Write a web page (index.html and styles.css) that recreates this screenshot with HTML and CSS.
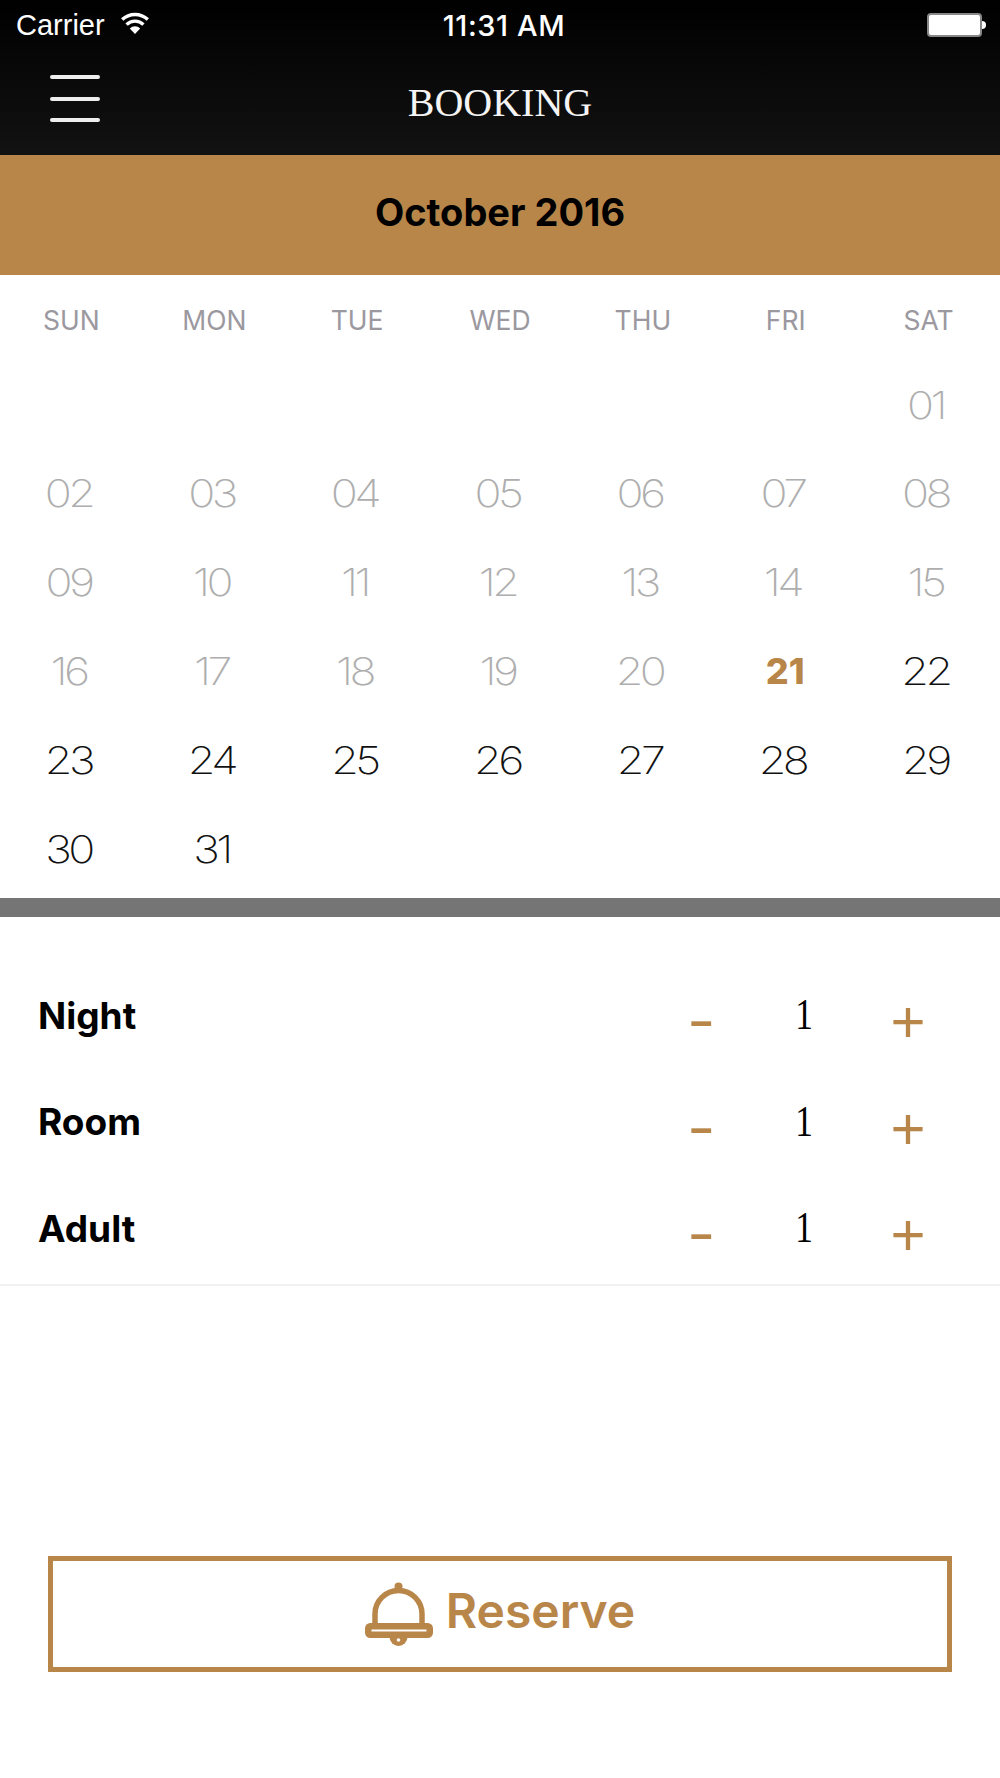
FILE: index.html
```html
<!DOCTYPE html>
<html lang="en">

<head>
  <meta charset="UTF-8">
  <meta name="viewport" content="width=device-width, initial-scale=1.0">
  <title>Booking</title>
  <link rel="stylesheet" href="styles.css">
</head>

<body>
  <header class="top">
    <div class="status">
      <div class="status-left">
        <span class="carrier">Carrier</span>
        <svg class="wifi" viewBox="0 0 30 22" width="30" height="22">
          <path d="M15 22 9.8 16.4a7.4 7.4 0 0 1 10.4 0z" fill="#fff" />
          <path d="M6.6 12.6a12 12 0 0 1 16.8 0M2.2 7.6a18.600 18.600 0 0 1 25.600 0" fill="none" stroke="#fff" stroke-width="3.400" />
        </svg>
      </div>
      <span class="clock">11:31 AM</span>
      <div class="battery"><span class="battery-body"></span><span class="battery-nub"></span></div>
    </div>
    <div class="nav">
      <button class="menu" aria-label="Menu"><span></span><span></span><span></span></button>
      <h1 class="title">BOOKING</h1>
    </div>
  </header>

  <div class="month">October 2016</div>

  <section class="calendar">
    <div class="weekdays">
      <span>SUN</span><span>MON</span><span>TUE</span><span>WED</span><span>THU</span><span>FRI</span><span>SAT</span>
    </div>
    <div class="days">
      <span></span><span></span><span></span><span></span><span></span><span></span><span class="past">01</span>
      <span class="past">02</span><span class="past">03</span><span class="past">04</span><span class="past">05</span><span class="past">06</span><span class="past">07</span><span class="past">08</span>
      <span class="past">09</span><span class="past">10</span><span class="past">11</span><span class="past">12</span><span class="past">13</span><span class="past">14</span><span class="past">15</span>
      <span class="past">16</span><span class="past">17</span><span class="past">18</span><span class="past">19</span><span class="past">20</span><span class="today">21</span><span>22</span>
      <span>23</span><span>24</span><span>25</span><span>26</span><span>27</span><span>28</span><span>29</span>
      <span>30</span><span>31</span>
    </div>
  </section>

  <div class="divider"></div>

  <section class="options">
    <div class="option">
      <span class="option-name">Night</span>
      <div class="stepper"><span class="minus">-</span><span class="count">1</span><span class="plus">+</span></div>
    </div>
    <div class="option">
      <span class="option-name">Room</span>
      <div class="stepper"><span class="minus">-</span><span class="count">1</span><span class="plus">+</span></div>
    </div>
    <div class="option">
      <span class="option-name">Adult</span>
      <div class="stepper"><span class="minus">-</span><span class="count">1</span><span class="plus">+</span></div>
    </div>
  </section>

  <button class="reserve">
    <svg class="bell" viewBox="0 0 68 66" width="68" height="66">
      <path d="M10 41V32a23.500 23.500 0 0 1 47 0v9" fill="none" stroke="#b9864a" stroke-width="5.500" />
      <circle cx="33.500" cy="4.500" r="4" fill="#b9864a" />
      <rect x="3.250" y="44.250" width="61.500" height="8.500" rx="2" fill="none" stroke="#b9864a" stroke-width="6.500" />
      <path d="M24.500 55a9 9 0 0 0 18 0z" fill="#b9864a" />
      <circle cx="33.500" cy="58" r="1.800" fill="#fff" />
    </svg>
    <span>Reserve</span>
  </button>
</body>

</html>
```

FILE: styles.css
```css
* {
  box-sizing: border-box;
}

body {
  margin: 0;
  background-color: #fff;
  font-family: "Inter", "Liberation Sans", sans-serif;
  color: #000;
}

.top {
  height: 155px;
  background: linear-gradient(#000, #121212);
  color: #fff;
}

.status {
  display: flex;
  align-items: center;
  justify-content: space-between;
  height: 50px;
  padding: 0 14px 0 16px;
}

.status-left {
  display: flex;
  align-items: center;
  gap: 15px;
  width: 200px;
}

.carrier {
  font-family: "Liberation Sans", sans-serif;
  font-size: 29px;
}

.clock {
  margin-left: 6px;
  font-size: 29px;
  font-weight: 500;
  letter-spacing: 0.600px;
}

.wifi {
  margin-top: -4px;
}

.battery {
  display: flex;
  align-items: center;
  justify-content: flex-end;
  width: 200px;
}

.battery-body {
  width: 55px;
  height: 24px;
  background-color: #fff;
  border: 2px solid #888;
  border-radius: 4px;
}

.battery-nub {
  width: 4px;
  height: 8px;
  background-color: #fff;
  border-radius: 0 4px 4px 0;
}

.nav {
  position: relative;
  display: flex;
  align-items: center;
  justify-content: center;
  height: 105px;
}

.menu {
  position: absolute;
  left: 50px;
  top: 25px;
  display: flex;
  flex-direction: column;
  gap: 17.500px;
  width: 50px;
  padding: 0;
  background: none;
  border: none;
}

.menu span {
  height: 4px;
  background-color: #eee;
  border-radius: 2px;
}

.title {
  margin: 0;
  font-family: "Liberation Serif", serif;
  font-size: 40px;
  font-weight: 400;
  color: #f4f4f4;
}

.month {
  height: 120px;
  line-height: 115px;
  background-color: #b9864a;
  font-size: 38px;
  font-weight: 700;
  text-align: center;
}

.calendar {
  height: 623px;
}

.weekdays {
  display: grid;
  grid-template-columns: repeat(7, 1fr);
  height: 85.600px;
  padding-top: 27px;
  line-height: 36px;
  font-size: 26.500px;
  color: #9b98a0;
  text-align: center;
}

.days {
  display: grid;
  grid-template-columns: repeat(7, 1fr);
  grid-auto-rows: 88.800px;
  font-size: 38px;
  font-weight: 200;
  line-height: 88px;
  text-align: center;
  color: #111;
}

.days span {
  padding-right: 5px;
  letter-spacing: -3px;
  transform: scaleX(1.180);
}

.past {
  color: #aeaeae;
}

.days .today {
  padding-right: 1px;
  font-size: 36px;
  font-weight: 800;
  letter-spacing: 0;
  color: #b9864a;
  transform: none;
}

.divider {
  height: 19px;
  background-color: #757575;
}

.options {
  height: 369px;
  padding-top: 45px;
  border-bottom: 2px solid #f1f1f1;
}

.option {
  display: flex;
  align-items: center;
  justify-content: space-between;
  height: 106.500px;
  padding: 0 41px 0 38px;
}

.option-name {
  font-size: 37px;
  font-weight: 700;
}

.stepper {
  display: grid;
  grid-template-columns: 102px 102px 102px;
  align-items: start;
  text-align: center;
}

.minus,
.plus {
  font-family: "Liberation Sans", sans-serif;
  font-size: 60px;
  line-height: 60px;
  color: #b9864a;
}

.minus {
  padding: 11px 4px 0 0;
  transform: scaleX(1.350);
}

.plus {
  padding-top: 14px;
}

.count {
  padding: 7px 5px 0 0;
  font-family: "Liberation Serif", serif;
  font-size: 44px;
  line-height: 60px;
  transform: scaleX(0.800);
}

.reserve {
  display: flex;
  align-items: center;
  justify-content: center;
  gap: 13px;
  width: 904px;
  height: 116px;
  margin: 270px 0 0 48px;
  padding-bottom: 8px;
  background: #fff;
  border: 5px solid #b9864a;
  font-family: "Inter", sans-serif;
  font-size: 48px;
  font-weight: 600;
  color: #b9864a;
}

.bell {
  margin-top: 8px;
}
```
